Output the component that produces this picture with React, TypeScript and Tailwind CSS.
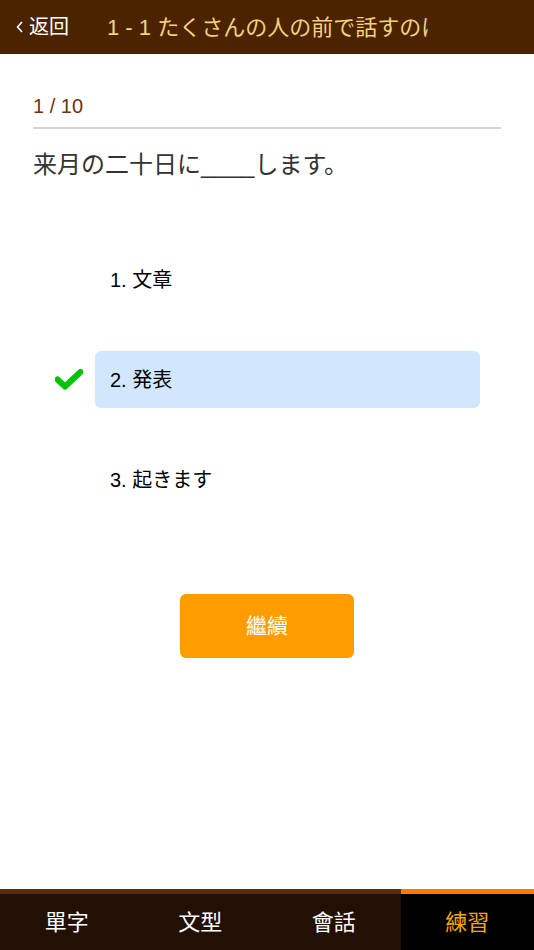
import React, { FunctionComponent, useState } from "react";

const font = { fontFamily: '"Liberation Sans", "Noto Sans CJK JP", sans-serif' };
const fontTC = { fontFamily: '"Liberation Sans", "Noto Sans CJK TC", sans-serif' };

const options = [
  { id: 1, label: "1. 文章" },
  { id: 2, label: "2. 発表" },
  { id: 3, label: "3. 起きます" },
];

const tabs = ["單字", "文型", "會話", "練習"];

const Check = () => (
  <svg width="28" height="21" viewBox="0 0 28 21">
    <path d="M2.5 10.5 L10 17.5 L25.5 3" fill="none" stroke="#00c300" strokeWidth="6" strokeLinecap="round" strokeLinejoin="round" />
  </svg>
);

const App: FunctionComponent = () => {
  const [selected] = useState(2);
  const [activeTab] = useState(3);

  return (
    <div className="flex flex-col h-screen w-full bg-white" style={font}>
      <div className="h-[54px] bg-[#4b2300] flex items-center shrink-0">
        <div className="flex items-center pl-[15px] w-[107px] text-white text-[20px]">
          <svg width="10" height="14" viewBox="0 0 10 14" className="mr-[4px]">
            <path d="M7 2 L2.5 7 L7 12" fill="none" stroke="#fff" strokeWidth="1.6" />
          </svg>
          返回
        </div>
        <div className="w-[321px] overflow-hidden whitespace-nowrap text-[22px] text-[#f4d27a]">
          1 - 1 たくさんの人の前で話すのは苦手です
        </div>
      </div>

      <div className="flex-1 px-[33px]">
        <div className="pt-[38px] pb-[7px] text-[20px] leading-[28px] text-[#6b3410] border-b-2 border-[#d4d4d4]">
          1 / 10
        </div>
        <div className="mt-[20px] text-[24px] leading-[32px] text-[#333333]">
          来月の二十日に____します。
        </div>

        <div className="mt-[70px] flex flex-col gap-[43px]">
          {options.map((o) => (
            <div key={o.id} className="flex items-center h-[57px]">
              <div className="w-[62px] flex justify-start pl-[22px]">
                {o.id === selected && <Check />}
              </div>
              <div
                className={
                  o.id === selected
                    ? "flex-1 h-full flex items-center px-[15px] rounded-md bg-[#d1e7fd] text-[20px] text-black mr-[21px]"
                    : "flex-1 h-full flex items-center px-[15px] rounded-md text-[20px] text-black mr-[21px]"
                }
              >
                {o.label}
              </div>
            </div>
          ))}
        </div>

        <div className="mt-[86px] flex justify-center">
          <button
            className="w-[174px] h-[64px] bg-[#ff9d00] rounded-md text-white text-[21px]"
            style={fontTC}
          >
            繼續
          </button>
        </div>
      </div>

      <div className="h-[61px] grid grid-cols-4 shrink-0" style={fontTC}>
        {tabs.map((t, i) => (
          <div
            key={t}
            className={
              i === activeTab
                ? "flex items-center justify-center border-t-[5px] border-[#ff7800] bg-black text-[#f2a900] text-[22px]"
                : "flex items-center justify-center border-t-[5px] border-[#5a2b07] bg-[#231005] text-white text-[22px]"
            }
          >
            {t}
          </div>
        ))}
      </div>
    </div>
  );
};

export default App;
